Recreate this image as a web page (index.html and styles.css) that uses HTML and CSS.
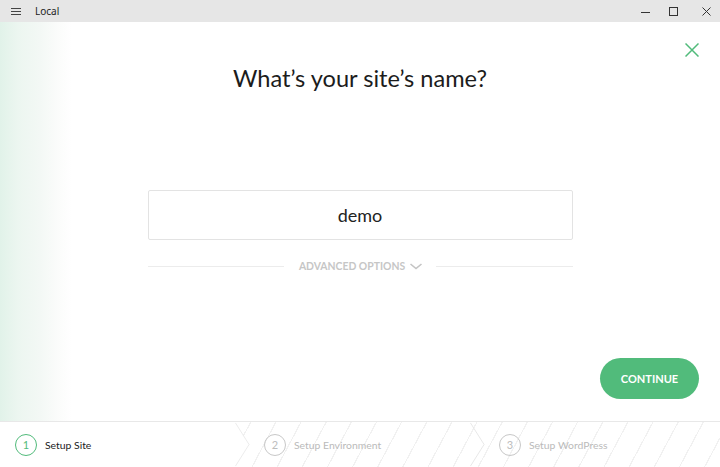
FILE: index.html
```html
<!DOCTYPE html>
<html>
<head>
<meta charset="utf-8">
<link rel="stylesheet" href="styles.css">
</head>
<body>
<div class="window">
  <header class="titlebar">
    <div class="tb-left">
      <svg class="hamburger" width="10" height="8" viewBox="0 0 10 8"><path d="M0 0.5H10M0 3.5H10M0 6.5H10" stroke="#444" stroke-width="1"/></svg>
      <span class="app-name">Local</span>
    </div>
    <div class="tb-controls">
      <span class="ctl"><svg width="9" height="9" viewBox="0 0 9 9"><path d="M0 5.5H9" stroke="#333" stroke-width="1"/></svg></span>
      <span class="ctl"><svg width="9" height="9" viewBox="0 0 9 9"><rect x="0.5" y="0.5" width="8" height="8" fill="none" stroke="#333" stroke-width="1"/></svg></span>
      <span class="ctl ctl-close"><svg width="9" height="9" viewBox="0 0 9 9"><path d="M0.5 0.5L8.5 8.5M8.5 0.5L0.5 8.5" stroke="#333" stroke-width="1"/></svg></span>
    </div>
  </header>

  <main class="main">
    <button class="close-x" aria-label="Close">
      <svg width="14" height="14" viewBox="0 0 14 14"><path d="M0.5 0.5L13.5 13.5M13.5 0.5L0.5 13.5" stroke="#51bb7b" stroke-width="1.5"/></svg>
    </button>
    <h1 class="title">What’s your site’s name?</h1>
    <div class="field">demo</div>
    <div class="advanced">
      <span class="rule"></span>
      <span class="adv-label">ADVANCED OPTIONS
        <svg width="12" height="7" viewBox="0 0 12 7"><path d="M0.5 1L6 5.5L11.5 1" fill="none" stroke="#c4c4c4" stroke-width="1.6"/></svg>
      </span>
      <span class="rule"></span>
    </div>
    <div class="actions">
      <button class="continue">CONTINUE</button>
    </div>
  </main>

  <footer class="steps">
    <div class="step step-active step-1">
      <span class="num">1</span><span class="label">Setup Site</span>
    </div>
    <svg class="sep sep-first" width="16" height="46" viewBox="0 0 16 46"><path d="M0 0L15 23L0 46Z" fill="#fff"/><path d="M0.5 0L15 23L0.5 46" fill="none" stroke="#ebebeb" stroke-width="1"/></svg>
    <div class="step step-2">
      <span class="num">2</span><span class="label">Setup Environment</span>
    </div>
    <svg class="sep" width="16" height="46" viewBox="0 0 16 46"><path d="M0.5 0L15 23L0.5 46" fill="none" stroke="#e6e6e6" stroke-width="1"/></svg>
    <div class="step step-3">
      <span class="num">3</span><span class="label">Setup WordPress</span>
    </div>
  </footer>
</div>
</body>
</html>
```

FILE: styles.css
```css
* { box-sizing: border-box; }
html, body { margin: 0; padding: 0; }
body {
  width: 720px;
  height: 467px;
  overflow: hidden;
  font-family: "Open Sans", "Noto Sans", sans-serif;
  background: #fff;
}
.window {
  display: flex;
  flex-direction: column;
  height: 467px;
}
.titlebar {
  height: 22px;
  background: #e6e6e6;
  display: flex;
  align-items: center;
  justify-content: space-between;
  flex-shrink: 0;
}
.tb-left {
  display: flex;
  align-items: center;
  padding-left: 11px;
}
.hamburger { display: block; margin-top: 1px; }
.app-name {
  margin-left: 14px;
  font-size: 10px;
  color: #222;
  font-family: "Noto Sans", "Open Sans", sans-serif;
}
.tb-controls {
  display: flex;
  align-items: center;
  gap: 19px;
  padding-right: 9px;
}
.ctl {
  width: 9px;
  height: 22px;
  display: flex;
  align-items: center;
  justify-content: center;
}
.ctl-close { margin-left: 5px; }
.ctl svg { display: block; }

.main {
  position: relative;
  height: 399px;
  display: flex;
  flex-direction: column;
  align-items: center;
  background: linear-gradient(to right, #e1f2e9 0px, #ecf6f0 18px, #f3f8f5 40px, #fbfcfb 58px, #fff 72px);
}
.close-x {
  position: absolute;
  top: 21px;
  right: 21px;
  padding: 0;
  border: 0;
  background: none;
  width: 14px;
  height: 14px;
}
.close-x svg { display: block; }
.title {
  margin: 41px 0 0;
  font-family: "Lato", sans-serif;
  font-weight: 400;
  font-size: 23.6px;
  line-height: 30px;
  color: #1c1c1c;
}
.field {
  margin-top: 97px;
  width: 425px;
  height: 50px;
  border: 1px solid #e3e3e3;
  border-radius: 2px;
  display: flex;
  align-items: center;
  justify-content: center;
  font-family: "Lato", sans-serif;
  font-size: 18px;
  color: #222;
  background: #fff;
}
.advanced {
  margin-top: 18px;
  width: 425px;
  height: 16px;
  display: flex;
  align-items: center;
}
.rule {
  flex: 1;
  height: 1px;
  background: #ececec;
}
.adv-label {
  display: flex;
  align-items: center;
  gap: 5px;
  padding: 0 14px 0 15px;
  font-family: "Lato", sans-serif;
  font-weight: 700;
  font-size: 10.4px;
  color: #c6c6c6;
}
.adv-label svg { display: block; margin-top: 1px; }
.actions {
  margin-top: auto;
  align-self: stretch;
  display: flex;
  justify-content: flex-end;
  padding: 0 21px 22px 0;
}
.continue {
  width: 99px;
  height: 41px;
  border: 0;
  border-radius: 21px;
  background: #51bb7b;
  color: #fff;
  font-family: "Lato", sans-serif;
  font-weight: 700;
  font-size: 11px;
  padding: 0;
}

.steps {
  height: 46px;
  border-top: 1px solid #e8e8e8;
  display: flex;
  align-items: stretch;
  background-color: #fff;
  background-image: repeating-linear-gradient(118deg, transparent 0px, transparent 21px, #f1f1f1 21px, #f1f1f1 22.2px);
}
.step {
  display: flex;
  align-items: center;
  font-family: "Lato", sans-serif;
  font-size: 10.4px;
  color: #bababa;
}
.step-1 {
  width: 235px;
  background: #fff;
  padding-left: 15px;
}
.step-2 {
  width: 220px;
  padding-left: 14px;
}
.step-3 {
  flex: 1;
  padding-left: 14px;
}
.sep { display: block; flex-shrink: 0; width: 15px; height: 45px; }
.num {
  width: 22px;
  height: 22px;
  border-radius: 50%;
  border: 1.5px solid #c8c8c8;
  display: flex;
  align-items: center;
  justify-content: center;
  font-size: 11px;
  color: #bdbdbd;
  flex-shrink: 0;
}
.label { margin-left: 8px; }
.step-active { color: #222; }
.step-active .num {
  border-color: #51bb7b;
  color: #51bb7b;
}
```
